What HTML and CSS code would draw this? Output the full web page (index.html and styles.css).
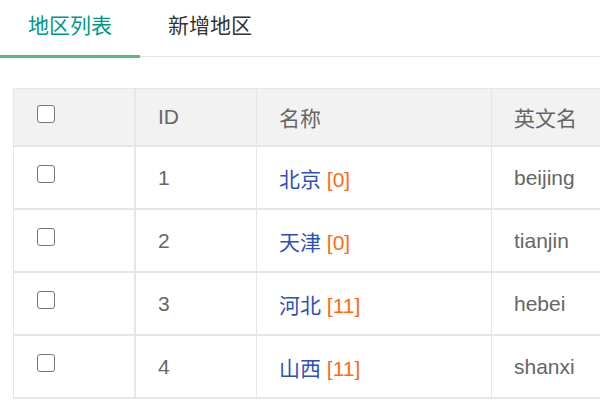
FILE: index.html
```html
<!DOCTYPE html>
<html lang="zh-CN">
<head>
<meta charset="utf-8">
<title>地区列表</title>
<link rel="stylesheet" href="styles.css">
</head>
<body>
<div class="page">
  <ul class="tabs">
    <li class="tab active">地区列表</li>
    <li class="tab">新增地区</li>
  </ul>
  <div class="table-wrap">
    <table class="grid">
      <thead>
        <tr>
          <th class="c1"><span class="cb"></span></th>
          <th class="c2">ID</th>
          <th class="c3">名称</th>
          <th class="c4">英文名</th>
        </tr>
      </thead>
      <tbody>
        <tr>
          <td class="c1"><span class="cb"></span></td>
          <td class="c2">1</td>
          <td class="c3"><a class="name">北京</a> <span class="count">[0]</span></td>
          <td class="c4">beijing</td>
        </tr>
        <tr>
          <td class="c1"><span class="cb"></span></td>
          <td class="c2">2</td>
          <td class="c3"><a class="name">天津</a> <span class="count">[0]</span></td>
          <td class="c4">tianjin</td>
        </tr>
        <tr>
          <td class="c1"><span class="cb"></span></td>
          <td class="c2">3</td>
          <td class="c3"><a class="name">河北</a> <span class="count">[11]</span></td>
          <td class="c4">hebei</td>
        </tr>
        <tr>
          <td class="c1"><span class="cb"></span></td>
          <td class="c2">4</td>
          <td class="c3"><a class="name">山西</a> <span class="count">[11]</span></td>
          <td class="c4">shanxi</td>
        </tr>
      </tbody>
    </table>
  </div>
</div>
</body>
</html>
```
FILE: styles.css
```css
html, body {
  margin: 0;
  padding: 0;
  background: #fff;
  overflow: hidden;
}
body {
  font-family: "Liberation Sans", "Noto Sans CJK SC", sans-serif;
  color: #666;
}
.page {
  width: 600px;
  height: 400px;
  overflow: hidden;
}
.tabs {
  list-style: none;
  margin: 0;
  padding: 0;
  display: flex;
  height: 56px;
  border-bottom: 1px solid #e6e6e6;
}
.tab {
  position: relative;
  padding: 0 28px;
  font-size: 21px;
  line-height: 52px;
  color: #333;
}
.tab.active {
  color: #009688;
}
.tab.active::after {
  content: "";
  position: absolute;
  left: 0;
  right: 0;
  bottom: -2px;
  height: 3px;
  background: #5fb878;
}
.table-wrap {
  margin-top: 31px;
  padding-left: 13px;
  width: 700px;
}
.grid {
  border-collapse: separate;
  border-spacing: 0;
  table-layout: fixed;
  border-left: 1px solid #e6e6e6;
  border-top: 1px solid #e6e6e6;
  font-size: 21px;
}
.grid th, .grid td {
  box-sizing: border-box;
  text-align: left;
  font-weight: normal;
  padding: 0 0 0 22px;
  vertical-align: middle;
  border-right: 1px solid #e6e6e6;
  border-bottom: 2px solid #e6e6e6;
  white-space: nowrap;
}
.grid thead th {
  height: 58px;
  background: #f2f2f2;
  color: #666;
}
.grid tbody td {
  height: 63px;
  color: #666;
}
.grid .c1 { width: 122px; border-right-width: 2px; padding-left: 23px; }
.grid .c2 { width: 121px; }
.grid .c3 { width: 235px; }
.grid .c4 { width: 160px; }
.cb {
  display: block;
  box-sizing: border-box;
  width: 18px;
  height: 18px;
  margin-top: -7px;
  border: 1.5px solid #777;
  border-radius: 3px;
  background: #fff;
}
.name {
  color: #2f4fb9;
  text-decoration: none;
}
.count {
  color: #ff6a13;
}
```
